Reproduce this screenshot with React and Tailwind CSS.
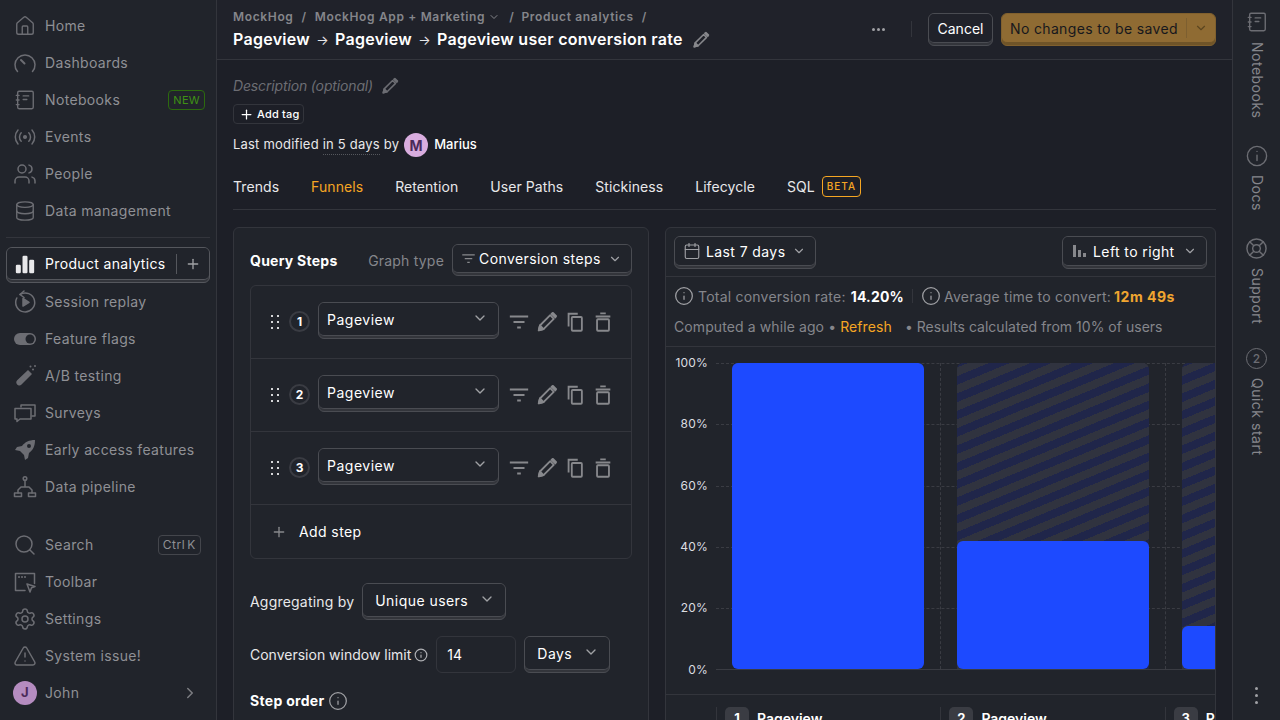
import React from "react";
import { ChevronDown, ChevronRight, Plus, Search, Settings, Users, Database, House, Calendar, Info, LifeBuoy, TriangleAlert } from "lucide-react";

const S = { fill: "none", stroke: "currentColor", strokeWidth: 1.5, strokeLinecap: "round", strokeLinejoin: "round", viewBox: "0 0 24 24" };
const Svg = ({ s = 24, children, ...p }) => <svg width={s} height={s} {...S} {...p}>{children}</svg>;

const Gauge = (p) => <Svg {...p}><path d="M4.5 20.5A10 10 0 1 1 19.5 20.5" /><path d="M8 9l3.5 3.5" strokeWidth="2" /></Svg>;
const Notebook = (p) => <Svg {...p}><rect x="4" y="2.5" width="17" height="19" rx="1.5" /><path d="M2.5 7h3M2.5 12h3M2.5 17h3M10 7.5h6M10 11.5h4" /></Svg>;
const Radio = (p) => <Svg {...p}><circle cx="12" cy="12" r="1.3" fill="currentColor" /><path d="M8.2 7.8a6 6 0 0 0 0 8.4M15.8 7.8a6 6 0 0 1 0 8.4M5 5a10.5 10.5 0 0 0 0 14M19 5a10.5 10.5 0 0 1 0 14" /></Svg>;
const Replay = (p) => <Svg {...p}><path d="M7 4.5A9.5 9.5 0 1 1 3.8 8" /><path d="M11 1L7 4.5l4 3" /><path d="M10 8.5l6 3.8-6 3.7z" fill="currentColor" /></Svg>;
const Toggle = (p) => <svg width={p.s || 24} height={p.s || 24} viewBox="0 0 24 24"><rect x="1" y="6" width="22" height="12" rx="6" fill="currentColor" /><circle cx="17" cy="12" r="4.5" fill="#21242b" /></svg>;
const Flask = () => <svg width={24} height={24} viewBox="0 0 24 24" fill="currentColor"><path d="M15 6l4 4-10.5 10.5a3 3 0 0 1-5-1 3 3 0 0 1 .7-3.2z" /><circle cx="20" cy="5.5" r="1" /><circle cx="17.5" cy="2.5" r="1" /><circle cx="22" cy="2" r="1" /></svg>;
const Survey = (p) => <Svg {...p}><path d="M8 6V4h14v11h-3" /><path d="M2 7.5h16V18H7l-3 2.5V18H2z" /></Svg>;
const RocketI = () => <svg width={24} height={24} viewBox="0 0 24 24" fill="currentColor"><path d="M22 2c-6 0-10 2-13 6l-5 1-2 3 5 1 4 4 1 5 3-2 1-5c4-3 6-7 6-13zM16 6a2 2 0 1 1 0 4 2 2 0 0 1 0-4z" /></svg>;
const Pipeline = (p) => <Svg {...p}><circle cx="12" cy="3.5" r="1.8" /><path d="M12 5.5V12M5 18v-3l3-3h8l3 3v3" /><rect x="1.5" y="18" width="7" height="3.5" /><rect x="15.5" y="18" width="7" height="3.5" /></Svg>;
const Toolbar = (p) => <Svg {...p}><path d="M12 20.5H2.5v-17h19v10" /><path d="M6 7h.01M9 7h.01M12 7h.01" strokeWidth="2" /><path d="M14 14l8 2.5-3.5 1.2L17 22z" /></Svg>;
const Bars = ({ s = 24 }) => <svg width={s} height={s} viewBox="0 0 24 24" fill="currentColor"><rect x="1" y="13" width="6" height="10" rx="1.5" /><rect x="9" y="2" width="6" height="21" rx="1.5" /><rect x="17" y="7" width="6" height="16" rx="1.5" /></svg>;
const Pencil = ({ s = 20 }) => <Svg s={s} strokeWidth="2"><path d="M3 21l1.3-5.2L15.5 4.6l3.9 3.9L8.2 19.7z" /><path d="M17 3l1.5-1 3.5 3.5-1 1.5z" fill="currentColor" /><path d="M3 21l1.3-5.2 3.9 3.9z" fill="currentColor" /></Svg>;
const Filter = ({ s = 20 }) => <Svg s={s} strokeWidth="2" strokeLinecap="butt"><path d="M2 6h20M6 12h12M10 18h4" /></Svg>;
const Copy = ({ s = 20 }) => <Svg s={s} strokeWidth="2" strokeLinecap="butt" strokeLinejoin="miter"><path d="M5 17V3h10" /><rect x="8.5" y="6.5" width="11" height="15" rx="1" /></Svg>;
const Trash = ({ s = 20 }) => <Svg s={s} strokeWidth="2" strokeLinecap="butt"><path d="M4 6h16M9 2.5h6" /><rect x="5.5" y="9" width="13" height="12.5" rx="1" /></Svg>;
const Grip = () => <svg width={8} height={14} viewBox="0 0 8 14" fill="#d5d6d8"><rect x="0" y="0" width="2" height="2" /><rect x="6" y="0" width="2" height="2" /><rect x="0" y="6" width="2" height="2" /><rect x="6" y="6" width="2" height="2" /><rect x="0" y="12" width="2" height="2" /><rect x="6" y="12" width="2" height="2" /></svg>;
const Arrow = () => <span className="inline-block w-[25px] text-center font-normal text-[13px] tracking-normal text-[#e8e8ea]">→</span>;

const ICON = "w-[26px] flex justify-center items-center shrink-0 text-[#6c6d73]";
const Item = ({ icon, label, right }) => (
  <div className="h-[37px] flex items-center pl-[12px] pr-[11px] text-[14px] tracking-[0.35px] text-[#8f9095]">
    <span className={ICON}>{icon}</span>
    <span className="ml-[7px] flex-1">{label}</span>
    {right}
  </div>
);

const Btn = ({ className = "", face = "bg-[#21242b]", outer = "border-[#4a4c52] bg-[#33353b]", line = "border-[#4a4c52]", children }) => (
  <div className={`rounded-[6px] border ${outer} pb-[2px] flex shrink-0 ${className}`}>
    <div className={`flex-1 rounded-[5px] border-b ${line} ${face} flex items-center`}>{children}</div>
  </div>
);

const Step = ({ n }) => (
  <div className="h-[73px] border-b border-[#33353c] flex items-start pt-[16px] pl-[20px]">
    <span className="mt-[13px]"><Grip /></span>
    <span className="ml-[10px] mt-[9px] w-[21px] h-[21px] rounded-full border-2 border-[#3a3c43] flex items-center justify-center text-[12px] font-bold text-white">{n}</span>
    <Btn className="ml-[8px] w-[181px] h-[37px]">
      <span className="pl-[8px] flex-1 text-[14px] tracking-[0.5px] text-white">Pageview</span>
      <ChevronDown size={16} className="mr-[10px] -mt-[2px] text-[#a0a1a5]" />
    </Btn>
    <div className="flex text-[#87888c] ml-[9px] mt-[9px] gap-[6px]">
      <Filter s={22} /><Pencil s={22} /><Copy s={22} /><Trash s={22} />
    </div>
  </div>
);

const Grid = ({ top }) => <div className="absolute left-[50px] right-0 border-t border-dashed border-[#3a3c43]" style={{ top }} />;
const Axis = ({ top, children }) => <span className="absolute left-0 w-[42px] text-right text-[12px] leading-[14px] tracking-[0.2px] text-[#dcdde0]" style={{ top }}>{children}</span>;
const HATCH = "bg-[repeating-linear-gradient(-22.5deg,#20264a,#20264a_8px,#30333f_8px,#30333f_16px)]";
const Col = ({ h, last }) => (
  <div className={`w-[225px] shrink-0 pl-[16px] h-full flex ${last ? "" : "border-r border-dashed border-[#3a3c43]"}`}>
    <div className={`w-[192px] h-full rounded-t-[6px] flex flex-col justify-end ${h === 306 ? "" : HATCH}`}>
      <div className="rounded-[6px] bg-[#1d4aff]" style={{ height: h }} />
    </div>
  </div>
);
const Foot = ({ n }) => (
  <div className="w-[224.4px] shrink-0 border-l border-[#33353c] pl-[8px] flex items-start">
    <span className="w-[24px] h-[24px] rounded-[5px] bg-[#3a3c43] flex items-center justify-center text-[13px] font-bold text-white">{n}</span>
    <span className="ml-[8px] text-[14px] font-semibold leading-[24px] text-white">Pageview</span>
  </div>
);

const Rail = ({ icon, label, h, mt }) => (
  <div className="flex flex-col items-center text-[#6c6d73]" >
    {icon}
    <span className="[writing-mode:vertical-rl] whitespace-nowrap text-[14px] tracking-[0.5px] text-[#85868b] leading-[16px]" style={{ height: h, marginTop: mt }}>{label}</span>
  </div>
);

export default function App() {
  return (
    <div className="h-screen w-[1280px] overflow-hidden flex bg-[#1d1f27] font-['Inter',sans-serif] text-white">
      <aside className="w-[217px] shrink-0 bg-[#21242b] border-r border-[#33353c] pt-[7px] flex flex-col">
        <Item icon={<House size={22} strokeWidth={1.5} />} label="Home" />
        <Item icon={<Gauge />} label="Dashboards" />
        <Item icon={<Notebook s={22} />} label="Notebooks" right={<span className="h-[20px] px-[4px] rounded-[4px] border border-[#2c6a0e] text-[#3f9214] text-[11px] leading-[18px] flex items-center tracking-[0.3px]">NEW</span>} />
        <Item icon={<Radio />} label="Events" />
        <Item icon={<Users size={24} strokeWidth={1.5} />} label="People" />
        <Item icon={<Database size={22} strokeWidth={1.5} />} label="Data management" />
        <div className="mx-[6px] mt-[8px] mb-[9px] border-t border-[#33353c]" />
        <Btn className="mx-[6px] h-[36px]" outer="border-[#55575d] bg-[#33353b]" line="border-[#55575d]">
          <span className="ml-[5px] w-[26px] flex justify-center text-[#e8e8ea]"><Bars s={20} /></span>
          <span className="ml-[7px] flex-1 text-[14px] tracking-[0.35px] text-white">Product analytics</span>
          <span className="h-[20px] border-l border-[#55575d] pl-[8px] pr-[8px] flex items-center"><Plus size={16} className="text-[#a0a1a5]" /></span>
        </Btn>
        <Item icon={<Replay />} label="Session replay" />
        <Item icon={<Toggle />} label="Feature flags" />
        <Item icon={<Flask />} label="A/B testing" />
        <Item icon={<Survey />} label="Surveys" />
        <Item icon={<RocketI />} label="Early access features" />
        <Item icon={<Pipeline />} label="Data pipeline" />
        <div className="h-[21px]" />
        <Item icon={<Search size={24} strokeWidth={1.5} />} label="Search" right={<span className="h-[20px] px-[4px] mr-[4px] rounded-[4px] border border-[#44464c] text-[#8f9095] text-[12px] flex items-center tracking-[0.6px] [word-spacing:-2px]">Ctrl K</span>} />
        <Item icon={<Toolbar />} label="Toolbar" />
        <Item icon={<Settings size={24} strokeWidth={1.5} />} label="Settings" />
        <Item icon={<TriangleAlert size={24} strokeWidth={1.5} />} label="System issue!" />
        <Item icon={<span className="w-[24px] h-[24px] rounded-full bg-[#b58cc0] text-[#4b2a5a] text-[13px] font-bold flex items-center justify-center">J</span>} label="John" right={<ChevronRight size={18} className="mr-[6px] text-[#7c7d82]" />} />
      </aside>

      <main className="w-[1015px] shrink-0 flex flex-col">
        <header className="h-[60px] shrink-0 border-b border-[#33353c] bg-[#20222a] px-[16px] flex justify-between">
          <div className="pt-[9px]">
            <div className="flex items-center text-[12px] font-semibold text-[#85868b] leading-[16px] tracking-[0.65px]">
              <span>MockHog</span><span className="mx-[8px]">/</span>
              <span>MockHog App + Marketing</span><ChevronDown size={12} className="ml-[3px]" /><span className="ml-[9px] mr-[7px]">/</span>
              <span>Product analytics</span><span className="ml-[8px]">/</span>
            </div>
            <div className="mt-[2px] flex items-center text-[16px] font-semibold leading-[24px] tracking-[0.28px] text-white">
              <span>Pageview<Arrow />Pageview<Arrow />Pageview user conversion rate</span>
              <span className="ml-[9px] text-[#87888c]"><Pencil s={18} /></span>
            </div>
          </div>
          <div className="pt-[13px] flex items-start">
            <span className="mt-[15px] flex gap-[2px]">
              <i className="w-[3px] h-[3px] rounded-full bg-[#a0a1a5]" /><i className="w-[3px] h-[3px] rounded-full bg-[#a0a1a5]" /><i className="w-[3px] h-[3px] rounded-full bg-[#a0a1a5]" />
            </span>
            <span className="ml-[26px] mt-[8px] h-[16px] border-l border-[#33353c]" />
            <Btn className="ml-[16px] w-[65px] h-[33px]" face="bg-[#20222a] justify-center">
              <span className="text-[14px] text-white">Cancel</span>
            </Btn>
            <Btn className="ml-[8px] w-[215px] h-[33px]" face="bg-[#8f6b33]" outer="border-[#80602e] bg-[#6f5428]" line="border-[#6f5428]">
              <span className="pl-[8px] flex-1 text-[14px] tracking-[0.35px] text-[#17181d]">No changes to be saved</span>
              <span className="h-[20px] border-l border-[#7d5f30] w-[29px] flex items-center justify-center"><ChevronDown size={14} className="text-[#5c4620]" /></span>
            </Btn>
          </div>
        </header>

        <div className="flex-1 min-h-0 px-[16px] overflow-hidden">
          <div className="pt-[15px] flex items-center h-[36px] text-[14px] italic tracking-[-0.15px] text-[#6c6d73]">
            Description (optional)
            <span className="ml-[8px] text-[#6c6d73]"><Pencil s={18} /></span>
          </div>
          <div className="mt-[8px] h-[20px] w-[71px] rounded-[4px] border border-[#33353c] flex items-center pl-[5px] text-[11px] font-medium tracking-[0.2px] text-white">
            <Plus size={15} className="mr-[3px]" />Add tag
          </div>
          <div className="mt-[9px] h-[24px] flex items-center text-[13px] tracking-[0.2px] text-[#e8e8ea]">
            <span>Last modified&nbsp;</span>
            <span className="border-b border-dotted border-[#55575d] leading-[19px]">in 5 days</span>
            <span className="ml-[4px]">by</span>
            <span className="ml-[5px] w-[24px] h-[24px] rounded-full bg-[#d9addf] text-[#4b2a5a] text-[14px] font-bold flex items-center justify-center">M</span>
            <span className="ml-[6px] font-medium tracking-normal text-white">Marius</span>
          </div>
          <div className="mt-[9px] h-[44px] border-b border-[#33353c] flex items-center gap-[32px] text-[14px] tracking-[0.07px] text-[#e8e8ea] pb-[2px]">
            <span>Trends</span><span className="text-[#f5a623]">Funnels</span><span>Retention</span><span>User Paths</span><span>Stickiness</span><span>Lifecycle</span>
            <span className="flex items-center">SQL<span className="ml-[7px] h-[21px] px-[4px] rounded-[4px] border border-[#f5a623] text-[#f5a623] text-[10px] font-medium tracking-[1px] flex items-center">BETA</span></span>
          </div>

          <div className="mt-[17px] flex gap-[16px] items-start">
            <section className="w-[416px] h-[600px] shrink-0 rounded-[6px] border border-[#33353c] bg-[#21242b] px-[16px] pt-[16px]">
              <div className="flex items-start h-[32px]">
                <span className="mt-[8px] text-[14px] font-bold leading-[18px] tracking-[0.25px] text-white">Query Steps</span>
                <span className="ml-auto mt-[8px] text-[14px] leading-[18px] tracking-[0.2px] text-[#85868b]">Graph type</span>
                <Btn className="ml-[8px] w-[180px] h-[32px]">
                  <span className="ml-[8px] text-[#87888c]"><Filter s={15} /></span>
                  <span className="ml-[3px] flex-1 text-[14px] tracking-[0.42px] text-white">Conversion steps</span>
                  <ChevronDown size={14} className="mr-[9px] text-[#a0a1a5]" />
                </Btn>
              </div>
              <div className="mt-[9px] rounded-[6px] border border-[#33353c]">
                <Step n={1} /><Step n={2} /><Step n={3} />
                <div className="h-[53px] flex items-center pl-[20px] text-[14px] tracking-[0.4px] text-white">
                  <Plus size={16} className="text-[#87888c]" /><span className="ml-[12px]">Add step</span>
                </div>
              </div>
              <div className="mt-[24px] flex items-center text-[14px] tracking-[0.2px] text-[#e8e8ea]">
                <span>Aggregating by</span>
                <Btn className="ml-[8px] w-[144px] h-[37px]">
                  <span className="pl-[12px] flex-1 text-[14px] tracking-[0.45px] text-white">Unique users</span>
                  <ChevronDown size={16} className="mr-[10px] -mt-[2px] text-[#a0a1a5]" />
                </Btn>
              </div>
              <div className="mt-[16px] flex items-center text-[14px] text-[#e8e8ea]">
                <span>Conversion window limit</span>
                <Info size={14} className="ml-[3px] text-[#b0b1b5]" />
                <span className="ml-[8px] w-[80px] h-[37px] rounded-[6px] border border-[#33353c] pl-[10px] flex items-center text-white">14</span>
                <Btn className="ml-[8px] w-[86px] h-[37px]">
                  <span className="pl-[12px] flex-1 text-[14px] tracking-[0.45px] text-white">Days</span>
                  <ChevronDown size={16} className="mr-[10px] -mt-[2px] text-[#a0a1a5]" />
                </Btn>
              </div>
              <div className="mt-[17px] flex items-center text-[14px] font-bold tracking-[0.3px] text-white">
                Step order<Info size={20} strokeWidth={1.5} className="ml-[4px] text-[#a0a1a5]" />
              </div>
            </section>

            <section className="w-[551px] h-[600px] shrink-0 rounded-[6px] border border-[#33353c] bg-[#21242b] overflow-hidden">
              <div className="h-[49px] border-b border-[#33353c] flex items-start justify-between pt-[8px] px-[8px]">
                <Btn className="w-[142px] h-[33px]">
                  <Calendar size={18} strokeWidth={1.5} className="ml-[8px] text-[#a0a1a5]" />
                  <span className="ml-[5px] flex-1 text-[14px] tracking-[0.4px] text-white">Last 7 days</span>
                  <ChevronDown size={14} className="mr-[9px] text-[#a0a1a5]" />
                </Btn>
                <Btn className="w-[145px] h-[33px]">
                  <span className="ml-[8px] text-[#87888c]"><svg width={16} height={16} viewBox="0 0 16 16" fill="currentColor"><rect x="2" y="2" width="3" height="12" /><rect x="7" y="7" width="3" height="7" /><rect x="12" y="10" width="3" height="4" /></svg></span>
                  <span className="ml-[6px] flex-1 text-[14px] tracking-[0.4px] text-white">Left to right</span>
                  <ChevronDown size={14} className="mr-[9px] text-[#a0a1a5]" />
                </Btn>
              </div>
              <div className="h-[70px] border-b border-[#33353c] px-[8px] pt-[7px] text-[14px] text-[#85868b]">
                <div className="h-[24px] flex items-center tracking-[0.22px]">
                  <Info size={20} strokeWidth={1.5} className="text-[#a0a1a5]" />
                  <span className="ml-[4px]">Total conversion rate:</span>
                  <span className="ml-[5px] font-bold tracking-[0.2px] text-white">14.20%</span>
                  <span className="ml-[8px] mr-[8px] h-[14px] border-l border-[#33353c]" />
                  <Info size={20} strokeWidth={1.5} className="text-[#a0a1a5]" />
                  <span className="ml-[3px]">Average time to convert:</span>
                  <span className="ml-[3px] font-bold tracking-[0.5px] text-[#f0a530]">12m 49s</span>
                </div>
                <div className="mt-[6px] h-[24px] flex items-center tracking-[0.1px]">
                  Computed a while ago •&nbsp;<span className="text-[#f5a623]">Refresh</span>
                  <span className="ml-[13px] tracking-[0.02px]">• Results calculated from 10% of users</span>
                </div>
              </div>
              <div className="relative h-[348px] border-b border-[#33353c] pt-[16px] pl-[50px] overflow-hidden">
                <Grid top={16} /><Grid top={77} /><Grid top={139} /><Grid top={200} /><Grid top={261} />
                <Axis top={9}>100%</Axis><Axis top={70}>80%</Axis><Axis top={132}>60%</Axis><Axis top={193}>40%</Axis><Axis top={254}>20%</Axis><Axis top={316}>0%</Axis>
                <div className="relative h-[307px] w-[700px] flex border-b border-[#3a3c43]">
                  <Col h={306} /><Col h={128} /><Col h={43} last />
                </div>
              </div>
              <div className="pt-[12px] pl-[50px] flex">
                <Foot n={1} /><Foot n={2} /><Foot n={3} />
              </div>
            </section>
          </div>
        </div>
      </main>

      <aside className="w-[48px] shrink-0 bg-[#21242b] border-l border-[#33353c] pt-[11px] flex flex-col items-center">
        <Rail icon={<Notebook s={22} />} label="Notebooks" h={77} mt={9} />
        <div className="h-[26px]" />
        <Rail icon={<svg width={22} height={22} {...S}><circle cx="12" cy="12" r="10.5" /><path d="M12 11v6M12 7h.01" /></svg>} label="Docs" h={36} mt={8} />
        <div className="h-[26px]" />
        <Rail icon={<LifeBuoy size={23} strokeWidth={1.5} />} label="Support" h={56} mt={8} />
        <div className="h-[24px]" />
        <Rail icon={<span className="w-[21px] h-[21px] rounded-full border border-[#6c6d73] text-[12px] font-medium flex items-center justify-center">2</span>} label="Quick start" h={76} mt={9} />
        <div className="mt-auto mb-[16px] flex flex-col gap-[4px]">
          <i className="w-[3px] h-[3px] rounded-full bg-[#a0a1a5]" /><i className="w-[3px] h-[3px] rounded-full bg-[#a0a1a5]" /><i className="w-[3px] h-[3px] rounded-full bg-[#a0a1a5]" />
        </div>
      </aside>
    </div>
  );
}
